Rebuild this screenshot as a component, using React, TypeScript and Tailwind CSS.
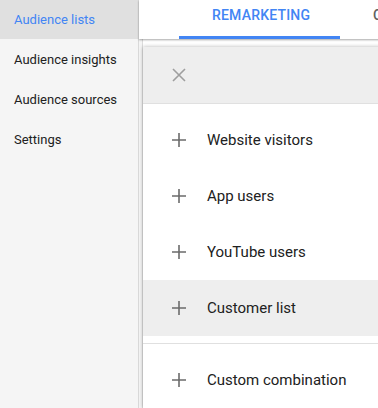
import React from 'react';

const navItems = ['Audience lists', 'Audience insights', 'Audience sources', 'Settings'];

const menuItems = ['Website visitors', 'App users', 'YouTube users', 'Customer list'];

const PlusIcon = () => (
  <svg width="14" height="14" viewBox="0 0 14 14" className="shrink-0">
    <path d="M7 0v14M0 7h14" stroke="#6b6b6b" strokeWidth="1.6" />
  </svg>
);

const CloseIcon = () => (
  <svg width="14" height="14" viewBox="0 0 14 14">
    <path d="M1 1l12 12M13 1L1 13" stroke="#9e9e9e" strokeWidth="1.6" />
  </svg>
);

const MenuRow: React.FC<{ label: string; active?: boolean }> = ({ label, active }) => (
  <div className={`flex h-14 items-center gap-[21px] pl-[29px] ${active ? 'bg-[#eeeeee]' : ''}`}>
    <PlusIcon />
    <span className="text-[15px] text-[#212121]">{label}</span>
  </div>
);

export default function App() {
  return (
    <div className="flex h-[408px] w-[378px] overflow-hidden bg-white font-['Roboto',sans-serif]">
      <aside className="w-[139px] shrink-0 border-r border-[#d9d9d9] bg-[#f5f5f5]">
        {navItems.map((item, i) => (
          <div
            key={item}
            className={`flex h-[39px] items-center pl-[14px] text-[13px] ${
              i === 0 ? 'bg-[#e0e0e0] text-[#4285f4]' : 'text-[#212121]'
            } ${i > 0 ? 'mt-px' : ''}`}
          >
            {item}
          </div>
        ))}
      </aside>

      <main className="relative flex flex-1 flex-col bg-[#f5f5f5]">
        {/* tab bar */}
        <div className="relative z-10 flex h-[39px] shrink-0 bg-white shadow-[0_1px_2px_rgba(0,0,0,0.35)]">
          <div className="ml-[40px] flex h-full w-[161px] shrink-0 items-center border-b-[3px] border-[#4285f4] pb-[6px] pl-[33px] text-[14px] font-medium tracking-[0.2px] text-[#4285f4]">
            REMARKETING
          </div>
          <div className="flex h-full items-center pb-[9px] pl-[33px] text-[14px] font-medium text-[#616161]">
            CUSTOM
          </div>
        </div>

        {/* table rows peeking out behind the popup */}
        <div className="ml-[3px] flex flex-1 flex-col border-l border-[#dcdcdc] bg-white">
          <div className="h-[57px] border-b border-[#d0d0d0]" />
          <div className="h-[41px]" />
          <div className="h-[49px] border-t-2 border-b border-t-[#7a7a7a] border-b-[#c8c8c8] bg-[#e4e4e4]" />
          <div className="h-[47px] border-b border-[#d0d0d0]" />
          <div className="h-[47px] border-b border-[#d0d0d0]" />
          <div className="h-[47px] border-b border-[#d0d0d0]" />
          <div className="h-[47px] border-b border-[#d0d0d0]" />
        </div>

        {/* popup */}
        <div className="absolute left-[4px] right-0 top-[47px] bottom-0 z-20 bg-white shadow-[0_0_4px_rgba(0,0,0,0.3)]">
          <div className="flex h-[57px] items-center border-b border-[#e0e0e0] bg-[#eeeeee] pl-[29px]">
            <CloseIcon />
          </div>
          <div className="pt-2">
            {menuItems.map((item) => (
              <MenuRow key={item} label={item} active={item === 'Customer list'} />
            ))}
          </div>
          <div className="mt-[7px] border-t border-[#e0e0e0] pt-2">
            <MenuRow label="Custom combination" />
          </div>
        </div>
      </main>
    </div>
  );
}
